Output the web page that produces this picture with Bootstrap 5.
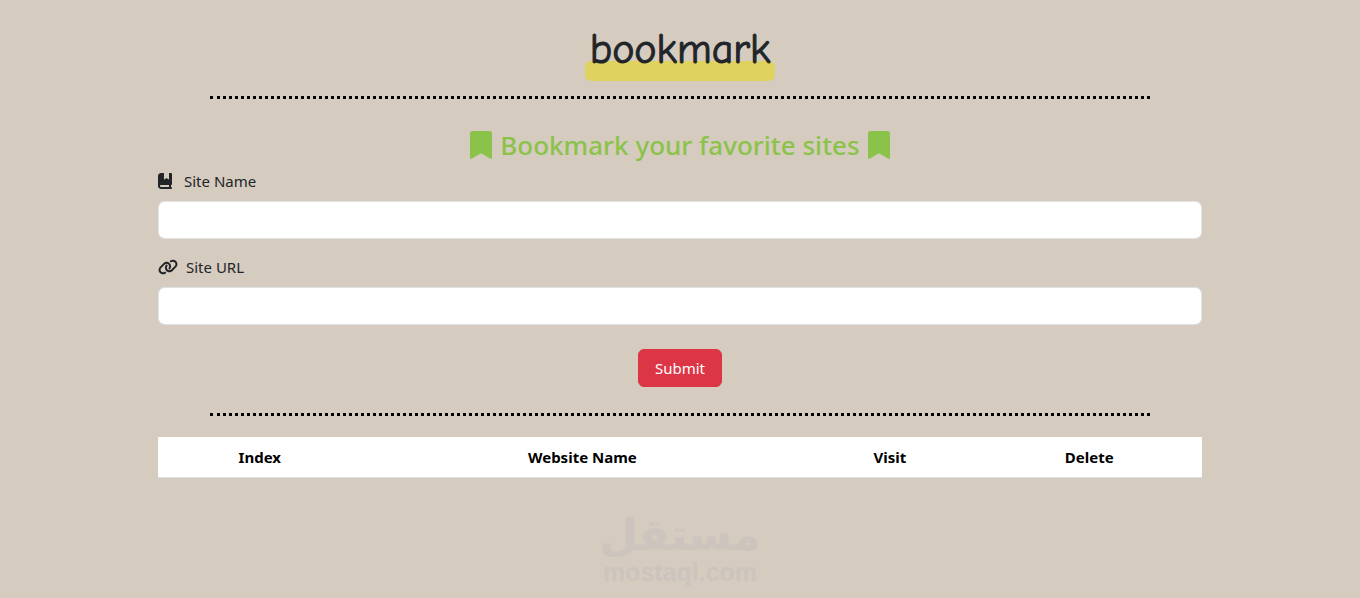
<!DOCTYPE html>
<html lang="en">
<head>
<meta charset="utf-8">
<meta name="viewport" content="width=device-width, initial-scale=1">
<title>bookmark</title>
<link href="https://cdn.jsdelivr.net/npm/bootstrap@5.3.0/dist/css/bootstrap.min.css" rel="stylesheet">
<style>
  body { background: #d5cbbe; font-family: "Noto Sans", sans-serif; font-size: 15px; }
  .page-pad { padding: 24px 36px 0; }
  .brand { font-family: "Comic Neue", "Noto Sans", sans-serif; font-size: 42px; line-height: 52px; padding: 0 5px; margin-bottom: 20px; isolation: isolate; -webkit-text-stroke: 1px currentColor; }
  .brand::before { content: ""; position: absolute; left: 0; right: 0; bottom: -5px; height: 20px; border-radius: 6px; background: #dfd25e; z-index: -1; }
  .dots { width: 90%; border-top: 3px dotted #000; opacity: 1; margin: 0 auto; }
  .dots-lower { margin: 26px auto 21px; }
  .tagline { color: #8bc34a; font-size: 26px; line-height: 34px; margin: 29px 0 7px; font-weight: 500; }
  .form-label { line-height: 24px; }
  .form-control, .btn { height: 38px; }
  .btn { font-size: 15px; width: 84px; }
  .sites { --bs-table-bg: #fff; --bs-table-color: #000; color: #000; }
  .sites th { line-height: 24px; }
  .sites .c-index { width: 19.5%; }
  .sites .c-name { width: 42.3%; }
  .sites .c-visit { width: 16.6%; }
  .watermark { color: #cdc4bd; font-family: "Liberation Sans", sans-serif; font-size: 25px; line-height: 28px; font-weight: 700; margin-top: 34px; }
  .watermark-ar { font-family: "DejaVu Sans", sans-serif; font-size: 44px; line-height: 46px; }
</style>
</head>
<body>
<main class="container">
  <div class="page-pad">
    <header class="text-center">
      <h1 class="brand d-inline-block position-relative fw-normal align-top">bookmark</h1>
      <hr class="dots">
    </header>
    <form>
      <h2 class="tagline d-flex justify-content-center align-items-center gap-2">
        <svg width="22" height="28" viewBox="0 0 22 28" fill="currentColor" aria-hidden="true"><path d="M0 2.600Q0 0 2.600 0H19.400Q22 0 22 2.600V26.500Q22 28.600 20 27.500L11 22.300 2 27.500Q0 28.600 0 26.500Z"/></svg>
        <span>Bookmark your favorite sites</span>
        <svg width="22" height="28" viewBox="0 0 22 28" fill="currentColor" aria-hidden="true"><path d="M0 2.600Q0 0 2.600 0H19.400Q22 0 22 2.600V26.500Q22 28.600 20 27.500L11 22.300 2 27.500Q0 28.600 0 26.500Z"/></svg>
      </h2>
      <div class="mb-3">
        <label class="form-label d-flex align-items-center" for="siteName">
          <svg class="me-2 flex-shrink-0" width="18" height="16" viewBox="0 0 576 512" fill="currentColor" aria-hidden="true"><path d="M0 96C0 43 43 0 96 0h96v190.700c0 13.400 15.500 20.900 26 12.500L272 160l54 43.200c10.500 8.400 26 .9 26-12.500V0h64c17.700 0 32 14.300 32 32v320c0 17.700-14.300 32-32 32v64c17.700 0 32 14.300 32 32s-14.300 32-32 32H96c-53 0-96-43-96-96V96zM64 416c0 17.700 14.300 32 32 32h256v-64H96c-17.700 0-32 14.300-32 32z"/></svg>
          <span>Site Name</span>
        </label>
        <input class="form-control" type="text" id="siteName">
      </div>
      <div class="mb-4">
        <label class="form-label d-flex align-items-center" for="siteUrl">
          <svg class="me-2 flex-shrink-0" width="20" height="16" viewBox="0 0 640 512" fill="currentColor" aria-hidden="true"><path d="M579.800 267.700c56.500-56.500 56.500-148 0-204.500-50-50-128.800-56.500-186.300-15.400l-1.600 1.100c-14.400 10.300-17.700 30.300-7.400 44.600s30.300 17.700 44.600 7.400l1.600-1.100c32.100-22.900 76-19.300 103.800 8.600 31.500 31.500 31.500 82.500 0 114L422.300 334.800c-31.500 31.500-82.500 31.500-114 0-27.900-27.900-31.500-71.800-8.600-103.800l1.100-1.600c10.300-14.400 6.900-34.400-7.400-44.600s-34.400-6.900-44.600 7.400l-1.100 1.600C206.500 251.200 213 330 263 380c56.500 56.500 148 56.500 204.500 0L579.800 267.700zM60.200 244.300c-56.500 56.500-56.500 148 0 204.500 50 50 128.800 56.500 186.300 15.400l1.600-1.100c14.400-10.300 17.700-30.300 7.400-44.600s-30.300-17.700-44.600-7.400l-1.600 1.100c-32.100 22.900-76 19.300-103.800-8.600C74 372 74 321 105.500 289.500L217.700 177.200c31.500-31.500 82.500-31.500 114 0 27.900 27.900 31.500 71.800 8.600 103.900l-1.100 1.600c-10.300 14.400-6.900 34.400 7.400 44.600s34.400 6.900 44.600-7.400l1.100-1.600C433.500 260.800 427 182 377 132c-56.500-56.500-148-56.500-204.500 0L60.200 244.300z"/></svg>
          <span>Site URL</span>
        </label>
        <input class="form-control" type="url" id="siteUrl">
      </div>
      <div class="text-center"><button class="btn btn-danger align-top px-0" type="button">Submit</button></div>
    </form>
    <hr class="dots dots-lower">
    <table class="table sites text-center mb-0">
      <thead><tr><th class="c-index" scope="col">Index</th><th class="c-name" scope="col">Website Name</th><th class="c-visit" scope="col">Visit</th><th scope="col">Delete</th></tr></thead>
    </table>
    <div class="watermark text-center"><div class="watermark-ar" lang="ar" dir="rtl">مستقل</div>mostaql.com</div>
  </div>
</main>
<script src="https://cdn.jsdelivr.net/npm/bootstrap@5.3.0/dist/js/bootstrap.bundle.min.js"></script>
</body>
</html>
